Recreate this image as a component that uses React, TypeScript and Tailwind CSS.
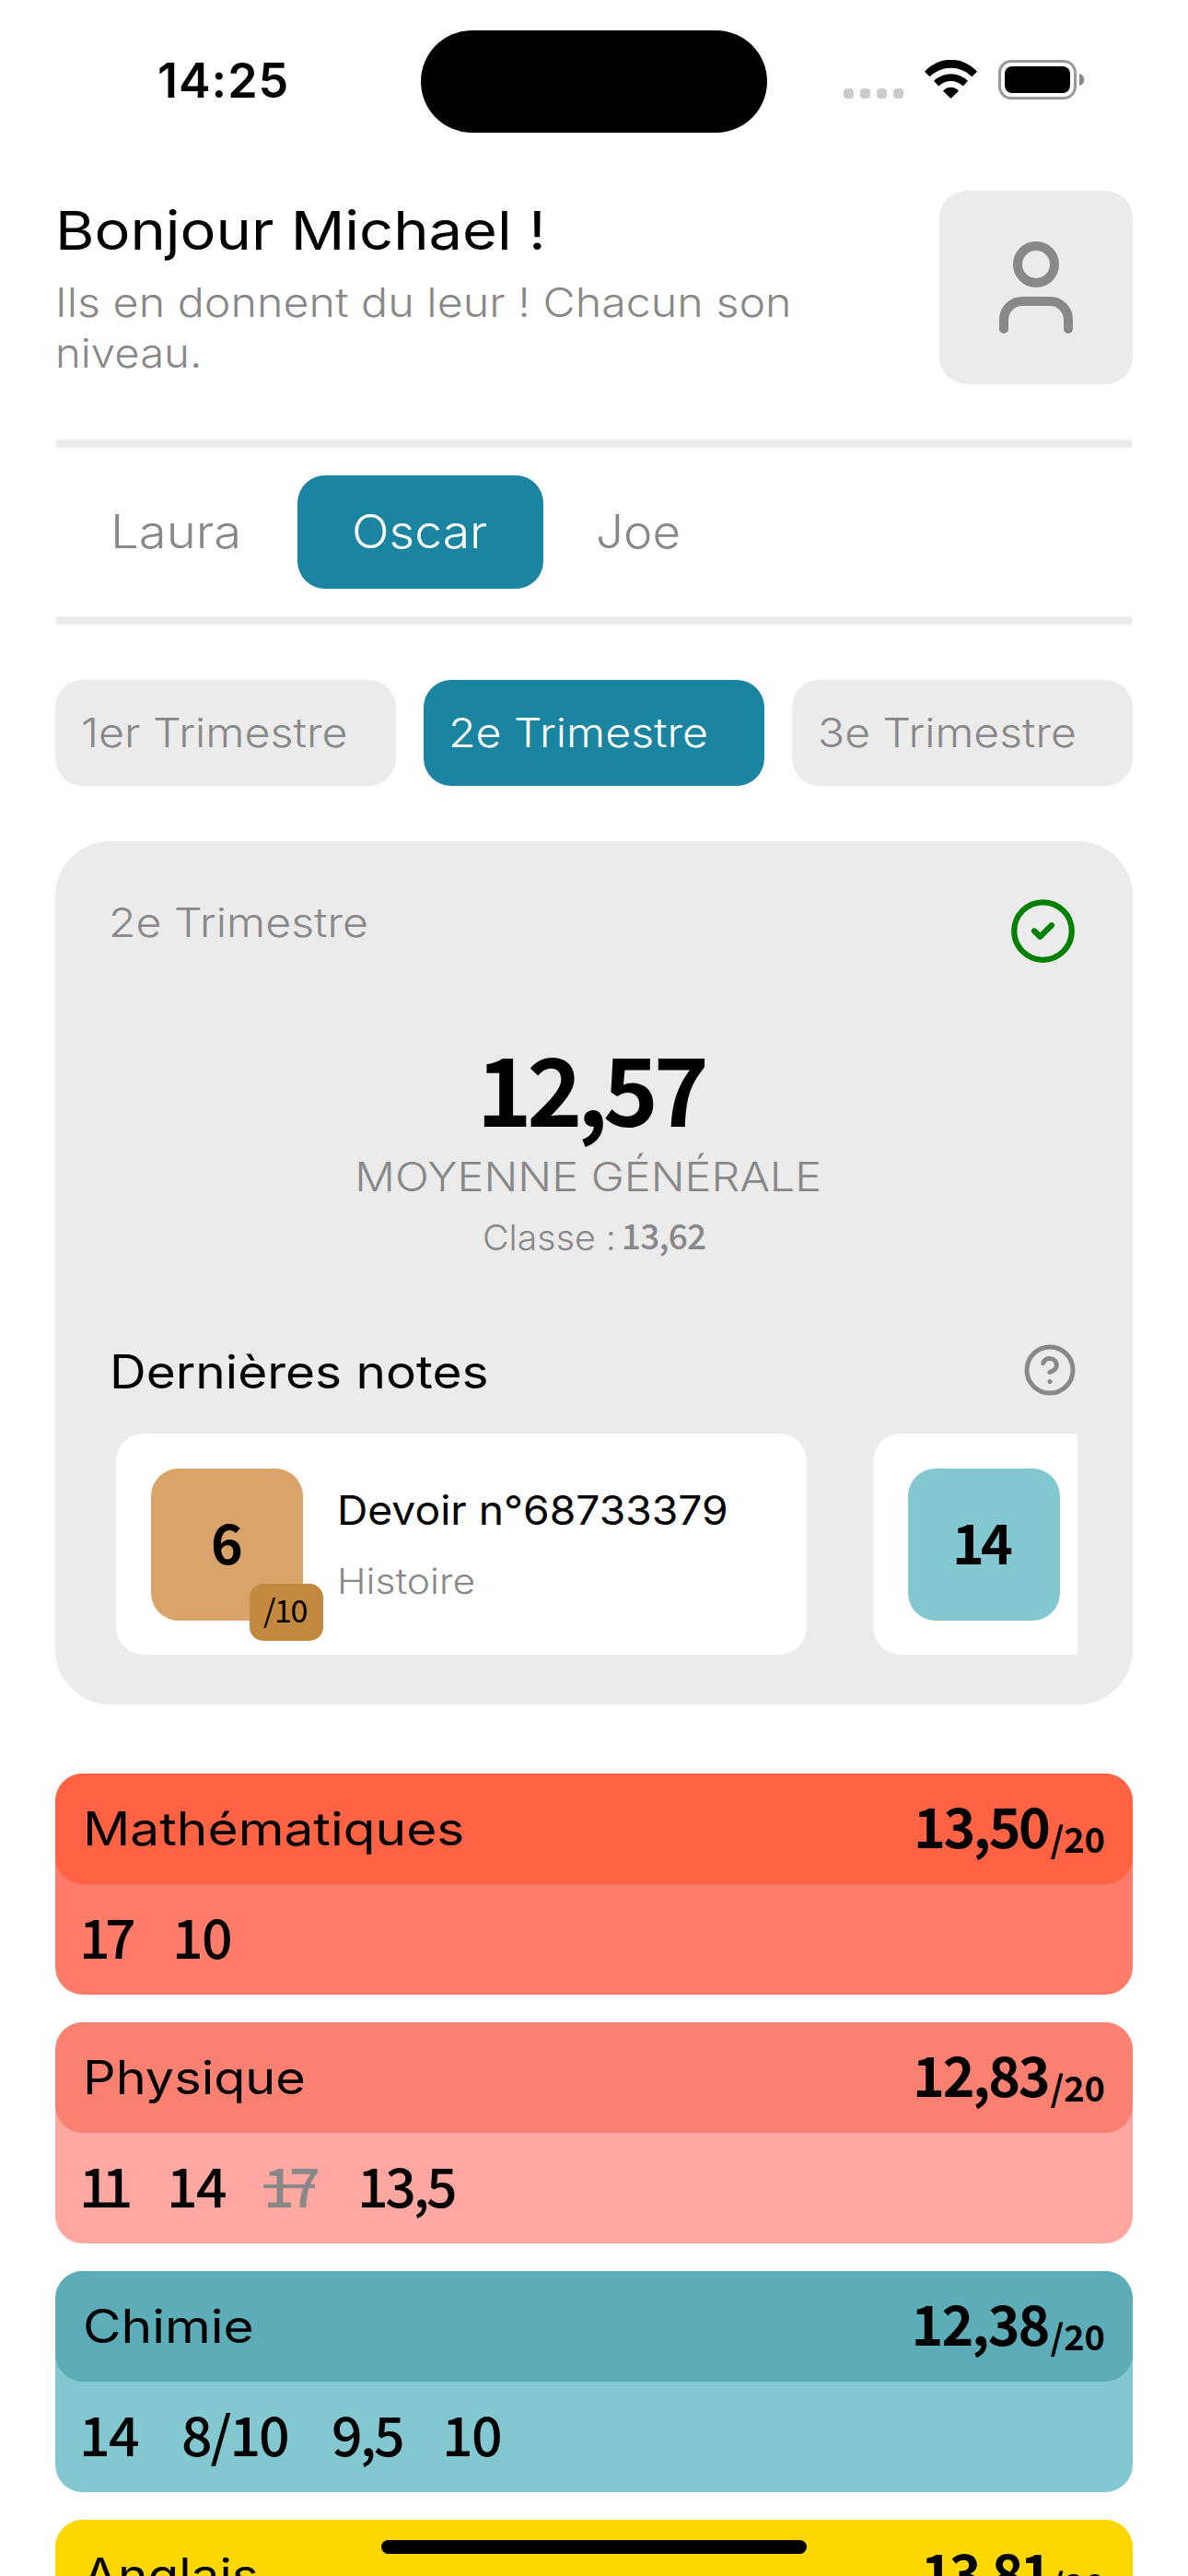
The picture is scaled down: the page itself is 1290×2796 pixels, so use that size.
import { CircleCheck, CircleHelp, User } from 'lucide-react';

const NUM = 'font-["Noto_Sans_CJK_JP","Noto_Sans",sans-serif]';

type Mark = { value: string; box: string; ignored?: boolean };
type Subject = {
  name: string;
  nameStretch: string;
  average: string;
  averageTracking: string;
  head: string;
  body: string;
  marks: Mark[];
};

const subjects: Subject[] = [
  {
    name: 'Mathématiques',
    nameStretch: 'scale-x-[1.137]',
    average: '13,50',
    averageTracking: 'tracking-[-2.4px]',
    head: 'bg-[#ff6344]',
    body: 'bg-[#ff7c6b]',
    marks: [
      { value: '17', box: 'w-[101px] tracking-[-5.6px]' },
      { value: '10', box: 'w-[100px] tracking-[-1.6px]' },
    ],
  },
  {
    name: 'Physique',
    nameStretch: 'scale-x-[1.116]',
    average: '12,83',
    averageTracking: 'tracking-[-2.2px]',
    head: 'bg-[#fa8072]',
    body: 'bg-[#ffa8a1]',
    marks: [
      { value: '11', box: 'w-[95px] tracking-[-9px]' },
      { value: '14', box: 'w-[105px] tracking-[-1.6px]' },
      { value: '17', box: 'w-[102px] tracking-[-5.6px]', ignored: true },
      { value: '13,5', box: 'w-[120px] tracking-[-3.3px]' },
    ],
  },
  {
    name: 'Chimie',
    nameStretch: 'scale-x-[1.138]',
    average: '12,38',
    averageTracking: 'tracking-[-1.9px]',
    head: 'bg-[#5cadb8]',
    body: 'bg-[#83c8d0]',
    marks: [
      { value: '14', box: 'w-[111px] tracking-[-1.6px]' },
      { value: '8/10', box: 'w-[163px] tracking-[-2.1px]' },
      { value: '9,5', box: 'w-[120px] tracking-[-2.6px]' },
      { value: '10', box: 'w-[100px] tracking-[-1.6px]' },
    ],
  },
  {
    name: 'Anglais',
    nameStretch: 'scale-x-[1.1]',
    average: '13,81',
    averageTracking: 'tracking-[-4px]',
    head: 'bg-[#ffd700]',
    body: 'bg-[#ffe34d]',
    marks: [],
  },
];

function StatusBar() {
  return (
    <div className="grid h-[207px] grid-cols-[457px_376px_1fr] items-start">
      <div className="pl-[171px] pt-[62px] text-[52px] font-semibold leading-[52px] tracking-[1px]">14:25</div>
      <div className="mt-[33px] h-[111px] rounded-full bg-black" />
      <div className="flex pl-[83px] pt-[65px]">
        <div className="flex gap-[7px] pt-[31px]">
          {[0, 1, 2, 3].map((i) => (
            <span key={i} className="size-[11px] rounded-[4px] bg-[#cbcbcb]" />
          ))}
        </div>
        <svg className="ml-[23px] h-[42px] w-[57px]" viewBox="0 0 57 42">
          <path d="M0 12.8A37.7 37.7 0 0 1 57 12.8L51.4 18.2A32.6 32.6 0 0 0 5.6 18.2Z" />
          <path d="M10 22.7A26.6 26.6 0 0 1 47 22.7L41.8 28.5A18.8 18.8 0 0 0 15.2 28.5Z" />
          <path d="M20 33.8A11 11 0 0 1 37 33.8L28.5 42Z" />
        </svg>
        <svg className="ml-[23px] h-[43px] w-[94px]" viewBox="0 0 94 43">
          <rect x="1.5" y="1.5" width="82" height="40" rx="12.5" fill="none" stroke="#999" strokeWidth="3" />
          <rect x="7" y="7" width="71" height="29" rx="8" />
          <path d="M88 15C95 17 95 26 88 28Z" fill="#888" />
        </svg>
      </div>
    </div>
  );
}

function Header() {
  return (
    <header className="flex h-[210px] justify-between">
      <div className="pt-[7px]">
        <h1 className="w-fit origin-left scale-x-[1.12] whitespace-nowrap text-[58px] leading-[72px]">Bonjour Michael !</h1>
        <p className="mt-[15px] text-[44px] font-light leading-[55px] text-[#888]">
          <span className="block w-fit origin-left scale-x-[1.1]">Ils en donnent du leur ! Chacun son</span>
          <span className="block w-fit origin-left scale-x-[1.075]">niveau.</span>
        </p>
      </div>
      <div className="flex size-[210px] items-center justify-center rounded-[30px] bg-[#ebebeb]">
        <User className="size-[120px] text-[#888]" strokeWidth={2} />
      </div>
    </header>
  );
}

function Divider() {
  return <div className="h-[9px] rounded-full bg-[#ebebeb]" />;
}

function Children() {
  return (
    <nav className="flex py-[30px] text-[50px] font-light leading-[123px] text-[#888]">
      <div className="w-[263px] pl-[60px]">
        <span className="inline-block origin-left scale-x-[1.089]">Laura</span>
      </div>
      <div className="w-[267px] rounded-[30px] bg-[#1b84a0] pl-[59px] text-white">
        <span className="inline-block origin-left scale-x-[1.07]">Oscar</span>
      </div>
      <div className="pl-[57px]">
        <span className="inline-block origin-left scale-x-[1.06]">Joe</span>
      </div>
    </nav>
  );
}

function Terms() {
  return (
    <div className="mt-[60px] grid grid-cols-3 gap-[30px] text-[44px] font-light leading-[115px] text-[#888]">
      <div className="rounded-[30px] bg-[#ebebeb] pl-[28px]">
        <span className="inline-block origin-left scale-x-[1.1]">1er Trimestre</span>
      </div>
      <div className="rounded-[30px] bg-[#1b84a0] pl-[27px] text-white">
        <span className="inline-block origin-left scale-x-[1.096]">2e Trimestre</span>
      </div>
      <div className="rounded-[30px] bg-[#ebebeb] pl-[28px]">
        <span className="inline-block origin-left scale-x-[1.093]">3e Trimestre</span>
      </div>
    </div>
  );
}

function Summary() {
  return (
    <section className="mt-[60px] h-[937px] rounded-[60px] bg-[#ebebeb] px-[60px] pt-[60px]">
      <div className="flex h-[75px] justify-between">
        <span className="-ml-[2px] origin-left scale-x-[1.096] text-[44px] font-light leading-[56px] text-[#888]">2e Trimestre</span>
        <CircleCheck className="size-[75px] text-[#008000]" strokeWidth={2} />
      </div>
      <div className={`mt-[76px] pr-[8px] text-center text-[102px] font-bold leading-[110px] tracking-[-5.4px] ${NUM}`}>12,57</div>
      <div className="mt-[16px] pr-[13px] text-center text-[44px] font-light leading-[54px] text-[#888]">
        <span className="inline-block scale-x-[1.103]">MOYENNE GÉNÉRALE</span>
      </div>
      <div className="mt-[16px] flex justify-center text-[38px] leading-[46px] text-[#888]">
        <span className="origin-left scale-x-[1.034] font-light">Classe :</span>
        <span className={`ml-[11px] text-[37px] font-medium leading-[41px] tracking-[-0.8px] ${NUM}`}>13,62</span>
      </div>
      <div className="mt-[91px] flex h-[60px] justify-between">
        <h2 className="-ml-px origin-left scale-x-[1.1] pt-[2px] text-[50px] leading-[60px]">Dernières notes</h2>
        <CircleHelp className="size-[60px] text-[#888]" strokeWidth={2} />
      </div>
      <div className="mt-[39px] flex gap-[72px] overflow-hidden pl-[6px]">
        <div className="flex h-[240px] w-[750px] shrink-0 rounded-[30px] bg-white pl-[38px] pt-[38px]">
          <div className="relative size-[165px] rounded-[30px] bg-[#d8a469]">
            <div className={`text-center text-[59px] font-bold leading-[157px] ${NUM}`}>6</div>
            <div className={`absolute left-[107px] top-[125px] h-[62px] w-[80px] rounded-[15px] bg-[#c3883f] pl-[15px] text-[34px] leading-[56px] tracking-[-1.4px] ${NUM}`}>
              /10
            </div>
          </div>
          <div className="pl-[37px] pt-[18px]">
            <div className="w-fit origin-left scale-x-[1.05] text-[44px] leading-[54px]">Devoir n°68733379</div>
            <div className="mt-[27px] w-fit origin-left scale-x-[1.12] text-[38px] font-light leading-[46px] text-[#888]">Histoire</div>
          </div>
        </div>
        <div className="h-[240px] w-[750px] shrink-0 rounded-[30px] bg-white pl-[38px] pt-[38px]">
          <div className="size-[165px] rounded-[30px] bg-[#83c8d0]">
            <div className={`pr-[7px] text-center text-[59px] font-bold leading-[157px] tracking-[-3.8px] ${NUM}`}>14</div>
          </div>
        </div>
      </div>
    </section>
  );
}

function SubjectCard({ subject }: { subject: Subject }) {
  return (
    <article className={`h-[240px] shrink-0 rounded-[30px] ${subject.body}`}>
      <div className={`flex h-[120px] justify-between rounded-[30px] px-[30px] ${subject.head}`}>
        <h3 className={`origin-left text-[50px] leading-[120px] ${subject.nameStretch}`}>{subject.name}</h3>
        <div className={`flex items-start font-bold ${NUM}`}>
          <span className={`text-[59px] leading-[112px] ${subject.averageTracking}`}>{subject.average}</span>
          <span className="ml-[2px] text-[38px] leading-[139px]">/20</span>
        </div>
      </div>
      <div className={`flex pl-[26px] text-[59px] font-medium leading-[112px] ${NUM}`}>
        {subject.marks.map((mark, i) => (
          <div key={i} className={mark.box}>
            <span className={mark.ignored ? 'text-[#888] line-through decoration-4' : ''}>{mark.value}</span>
          </div>
        ))}
      </div>
    </article>
  );
}

export default function App() {
  return (
    <div className="relative h-[2796px] w-[1290px] overflow-hidden bg-white font-[Inter,sans-serif] text-black">
      <StatusBar />
      <main className="px-[60px]">
        <Header />
        <div className="mt-[60px]">
          <Divider />
          <Children />
          <Divider />
        </div>
        <Terms />
        <Summary />
        <div className="mt-[75px] flex flex-col gap-[30px]">
          {subjects.map((s) => (
            <SubjectCard key={s.name} subject={s} />
          ))}
        </div>
      </main>
      <div className="absolute bottom-[24px] left-[414px] h-[15px] w-[462px] rounded-full bg-black" />
    </div>
  );
}
